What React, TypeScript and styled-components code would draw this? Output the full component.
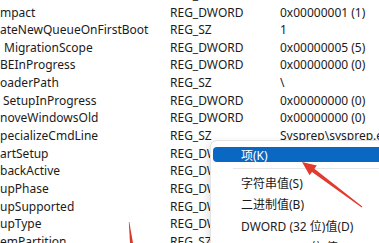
import React from "react";
import styled, { createGlobalStyle } from "styled-components";

const Global = createGlobalStyle`
  html, body {
    margin: 0;
    padding: 0;
    background: #ffffff;
    overflow: hidden;
  }
  body {
    font-family: "Noto Sans", "Noto Sans CJK SC", sans-serif;
    color: #1b1b1b;
  }
`;

const Page = styled.div`
  position: relative;
  width: 379px;
  height: 243px;
  overflow: hidden;
  background: #fff;
`;

const List = styled.div`
  display: flex;
  flex-direction: column;
  margin-top: -14.4px;
`;

const Row = styled.div`
  display: grid;
  grid-template-columns: 170px 110px 1fr;
  height: 17.65px;
  align-items: center;
  font-size: 12px;
  white-space: nowrap;
`;

const Cell = styled.span<{ $indent?: number }>`
  overflow: hidden;
  padding-left: ${(p) => p.$indent ?? 0}px;
`;

const Menu = styled.div`
  position: absolute;
  left: 210px;
  top: 140px;
  width: 190px;
  padding: 6px 2px 0 2px;
  background: #fff;
  border: 1px solid #e4e4e4;
  border-radius: 7px;
  box-shadow: -2px 3px 8px rgba(0, 0, 0, 0.12);
  display: flex;
  flex-direction: column;
  font-size: 12px;
`;

const Item = styled.div<{ $active?: boolean }>`
  display: flex;
  align-items: center;
  height: ${(p) => (p.$active ? 15 : 21.5)}px;
  padding-left: 28px;
  border-radius: 4px;
  white-space: nowrap;
  background: ${(p) => (p.$active ? "#0a67c2" : "transparent")};
  color: ${(p) => (p.$active ? "#fff" : "#1b1b1b")};
`;

const Separator = styled.div`
  height: 1px;
  margin: 6px 0 3px 20px;
  background: #e6e6e6;
`;

const Overlay = styled.svg`
  position: absolute;
  left: 0;
  top: 0;
  pointer-events: none;
`;

const rows: [string, string, string, number?][] = [
  ["Cmdline", "REG_SZ", "", 0],
  ["mpact", "REG_DWORD", "0x00000001 (1)"],
  ["ateNewQueueOnFirstBoot", "REG_SZ", "1"],
  ["MigrationScope", "REG_DWORD", "0x00000005 (5)", 4],
  ["BEInProgress", "REG_DWORD", "0x00000000 (0)"],
  ["oaderPath", "REG_SZ", "\\"],
  ["SetupInProgress", "REG_DWORD", "0x00000000 (0)", 3],
  ["noveWindowsOld", "REG_DWORD", "0x00000000 (0)"],
  ["pecializeCmdLine", "REG_SZ", "Sysprep\\sysprep.exe /oobe"],
  ["artSetup", "REG_DWORD", "0x00000000 (0)"],
  ["backActive", "REG_DWORD", "0x00000000 (0)"],
  ["upPhase", "REG_DWORD", "0x00000000 (0)"],
  ["upSupported", "REG_DWORD", "0x00000001 (1)"],
  ["upType", "REG_DWORD", "0x00000000 (0)"],
  ["emPartition", "REG_SZ", "\\Device\\HarddiskVolume1"],
];

export default function App() {
  return (
    <Page>
      <Global />
      <List>
        {rows.map(([name, type, data, indent]) => (
          <Row key={name}>
            <Cell $indent={indent}>{name}</Cell>
            <Cell>{type}</Cell>
            <Cell>{data}</Cell>
          </Row>
        ))}
      </List>
      <Menu>
        <Item $active>项(K)</Item>
        <Separator />
        <Item>字符串值(S)</Item>
        <Item>二进制值(B)</Item>
        <Item>DWORD (32 位)值(D)</Item>
        <Item>QWORD (64 位)值(Q)</Item>
      </Menu>
      <Overlay width="379" height="243" viewBox="0 0 379 243">
        <polygon
          fill="#e23a2c"
          points="302,162 316.8,165.6 314.4,168.8 362.3,206.6 361.7,207.4 312,172 309.6,175.2"
        />
        <polygon fill="#d8372b" points="128.8,222 129.3,222 133,243 130,243" />
      </Overlay>
    </Page>
  );
}
